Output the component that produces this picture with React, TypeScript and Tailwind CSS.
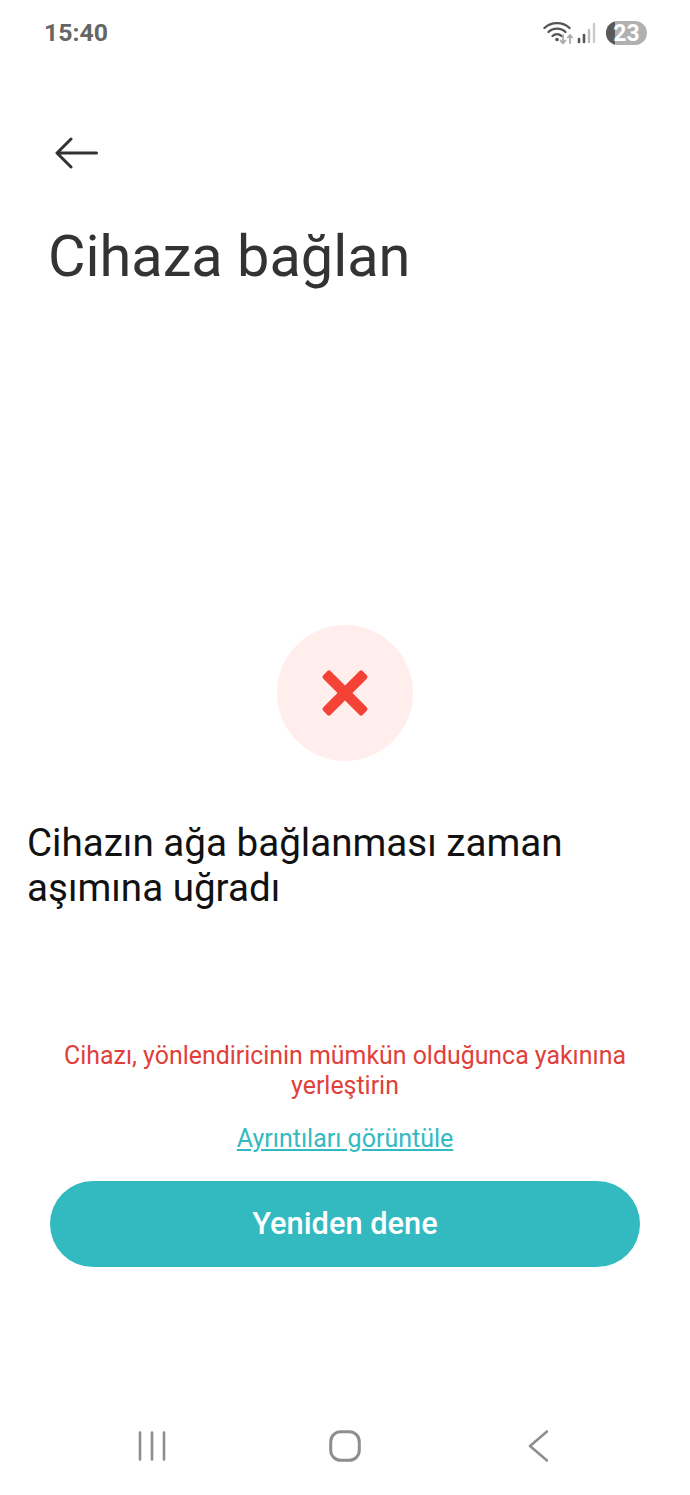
export default function App() {
  return (
    <div className="w-[690px] h-[1495px] bg-white flex flex-col overflow-hidden" style={{ fontFamily: 'Roboto, "Noto Sans", sans-serif' }}>
      <div className="h-[66px] shrink-0 flex items-center justify-between pl-[44px] pr-[43px]">
        <span className="text-[24.8px] leading-[28px] font-bold text-[#666666]">15:40</span>
        <div className="flex items-center">
          <svg width="30" height="26" viewBox="0 0 30 26" fill="none" className="mr-[3px]">
            <path d="M1.5 8 C8 1.5 20 1.5 26.5 8" stroke="#555" strokeWidth="2.4" strokeLinecap="round" />
            <path d="M5.5 12 C10 7.5 18 7.5 22.5 12" stroke="#555" strokeWidth="2.4" strokeLinecap="round" />
            <path d="M9.5 16 C12 13.5 16 13.5 18.5 16" stroke="#555" strokeWidth="2.4" strokeLinecap="round" />
            <circle cx="14" cy="19.5" r="1.8" fill="#555" />
            <path d="M20 15v8M17.5 20.5l2.5 2.8 2.5-2.8" stroke="#aaa" strokeWidth="1.8" strokeLinecap="round" strokeLinejoin="round" />
            <path d="M27 23v-8M24.8 17.5l2.2-2.5 2.2 2.5" stroke="#aaa" strokeWidth="1.8" strokeLinecap="round" strokeLinejoin="round" />
          </svg>
          <svg width="22" height="22" viewBox="0 0 22 22" fill="none" className="mr-[8px]">
            <path d="M3 17v3" stroke="#555" strokeWidth="2.6" strokeLinecap="round" />
            <path d="M8 13v7" stroke="#555" strokeWidth="2.6" strokeLinecap="round" />
            <path d="M13 8v12" stroke="#bbb" strokeWidth="2.4" strokeLinecap="round" />
            <path d="M18 2v18" stroke="#ccc" strokeWidth="2.4" strokeLinecap="round" />
          </svg>
          <div className="relative w-[41px] h-[24px] rounded-full bg-[#b0b0b0] overflow-hidden flex items-center justify-center">
            <div className="absolute left-0 top-0 bottom-0 w-[9px] bg-[#5a5a5a]" />
            <span className="relative text-[23px] leading-none font-bold text-white">23</span>
          </div>
        </div>
      </div>

      <div className="h-[66px] mt-[54px] shrink-0 pl-[55px] flex items-center">
        <svg width="44" height="32" viewBox="0 0 44 32" fill="none">
          <path d="M41.5 16H2M16 2L2 16l14 14" stroke="#333" strokeWidth="3" strokeLinecap="round" strokeLinejoin="round" />
        </svg>
      </div>

      <h1 className="mt-[32px] pl-[48px] text-[57.7px] leading-[76px] font-normal text-[#333333]">Cihaza bağlan</h1>

      <div className="mt-[331px] flex justify-center">
        <div className="w-[136px] h-[136px] rounded-full bg-[#ffeeec] flex items-center justify-center">
          <svg width="48" height="48" viewBox="0 0 48 48" fill="#f44336">
            <rect x="-4" y="18.75" width="56" height="10.5" rx="2.5" transform="rotate(45 24 24)" />
            <rect x="-4" y="18.75" width="56" height="10.5" rx="2.5" transform="rotate(-45 24 24)" />
          </svg>
        </div>
      </div>

      <p className="mt-[59px] px-[27px] text-[38.6px] leading-[45px] text-[#111111]">Cihazın ağa bağlanması zaman aşımına uğradı</p>

      <p className="mt-[131px] px-[50px] text-center text-[24.9px] leading-[30px] text-[#e0403a]">Cihazı, yönlendiricinin mümkün olduğunca yakınına yerleştirin</p>

      <div className="mt-[23px] text-center leading-[30px]">
        <a className="text-[25px] leading-[30px] text-[#33bac1] underline">Ayrıntıları görüntüle</a>
      </div>

      <button className="mt-[24px] mx-[50px] h-[86px] rounded-full bg-[#33bac1] text-white text-[30.8px] font-medium shrink-0">Yeniden dene</button>

      <div className="mt-[163px] flex items-center justify-between pl-[138px] pr-[142px] shrink-0">
        <svg width="28" height="30" viewBox="0 0 28 30" fill="none">
          <path d="M2 1.5v27M14 1.5v27M26 1.5v27" stroke="#8e8e8e" strokeWidth="2.6" strokeLinecap="round" />
        </svg>
        <svg width="32" height="32" viewBox="0 0 32 32" fill="none" className="-ml-[4px]">
          <rect x="1.7" y="1.7" width="28.6" height="28.6" rx="10" stroke="#8e8e8e" strokeWidth="3" />
        </svg>
        <svg width="20" height="32" viewBox="0 0 20 32" fill="none">
          <path d="M19 1.5L2 16l17 14.5" stroke="#8e8e8e" strokeWidth="2.6" strokeLinecap="round" strokeLinejoin="round" />
        </svg>
      </div>
    </div>
  );
}
